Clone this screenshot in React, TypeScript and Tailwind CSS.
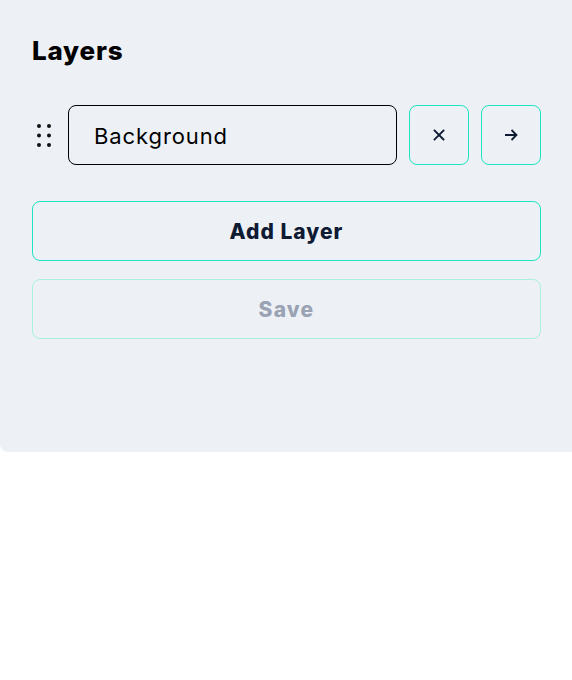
import React from "react";

export default function App() {
  return (
    <div className="w-[572px] h-[680px] bg-white overflow-hidden" style={{ fontFamily: "Inter, 'Open Sans', sans-serif" }}>
      <div className="w-[600px] h-[452px] bg-[#edf1f5] rounded-b-[8px] pt-[32px] pl-[32px] pr-[60px] flex flex-col">
        <h1 className="text-[26px] leading-[38px] font-extrabold text-black tracking-[0.8px]">Layers</h1>
        <div className="mt-[35px] flex items-center gap-[12px] w-[509px]">
          <svg width="24" height="24" viewBox="0 0 24 24" className="shrink-0">
            <circle cx="7" cy="3" r="2" fill="#111" />
            <circle cx="17" cy="3" r="2" fill="#111" />
            <circle cx="7" cy="12.5" r="2" fill="#111" />
            <circle cx="17" cy="12.5" r="2" fill="#111" />
            <circle cx="7" cy="22" r="2" fill="#111" />
            <circle cx="17" cy="22" r="2" fill="#111" />
          </svg>
          <div className="flex-1 h-[60px] rounded-[8px] border border-black flex items-center pl-[25px] pt-[2px] text-[22px] text-black tracking-[0.9px]">
            Background
          </div>
          <button className="w-[60px] h-[60px] shrink-0 rounded-[8px] border border-[#1fe3c2] flex items-center justify-center">
            <svg width="12" height="12" viewBox="0 0 12 12">
              <path d="M1.5 1.5L10.5 10.5M10.5 1.5L1.5 10.5" stroke="#0f1a33" strokeWidth="1.8" strokeLinecap="square" />
            </svg>
          </button>
          <button className="w-[60px] h-[60px] shrink-0 rounded-[8px] border border-[#1fe3c2] flex items-center justify-center">
            <svg width="14" height="12" viewBox="0 0 14 12">
              <path d="M1 6H12.5M7.5 1L12.5 6L7.5 11" stroke="#0f1a33" strokeWidth="1.8" fill="none" />
            </svg>
          </button>
        </div>
        <button className="mt-[36px] w-[509px] h-[60px] pt-[2px] rounded-[8px] border border-[#1fe3c2] text-[21px] font-extrabold text-[#0f1a33] tracking-[1px]">
          Add Layer
        </button>
        <button className="mt-[18px] w-[509px] h-[60px] pt-[2px] rounded-[8px] border border-[#a9f0e2] text-[21px] font-extrabold text-[#9aa2b3] tracking-[1.2px]">
          Save
        </button>
      </div>
    </div>
  );
}
